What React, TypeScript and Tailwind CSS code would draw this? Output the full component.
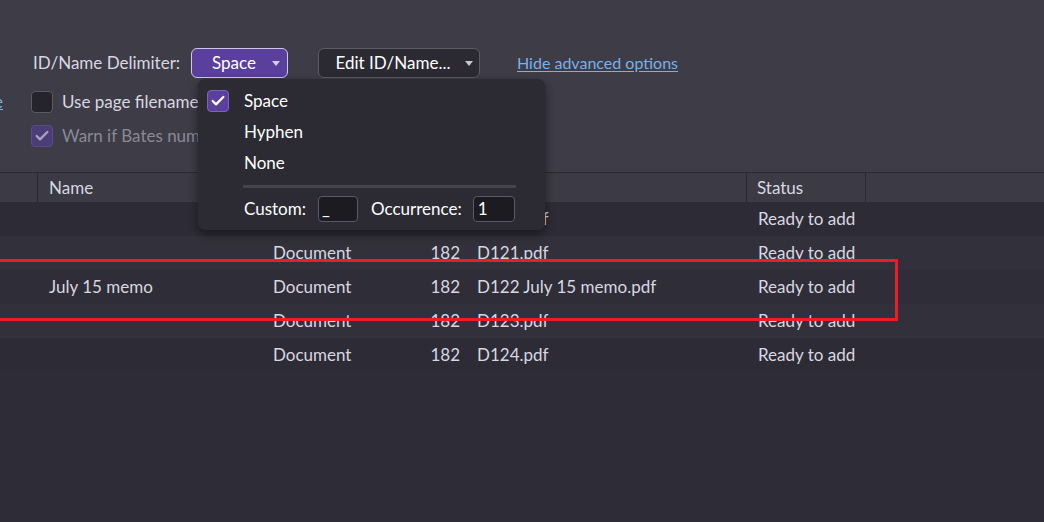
import { Check } from "lucide-react"

const ROWS = [
  { name: "", type: "Document", pages: "182", file: "D120.pdf", status: "Ready to add", bg: "bg-[#2d2c36]" },
  { name: "", type: "Document", pages: "182", file: "D121.pdf", status: "Ready to add", bg: "bg-[#32313b]" },
  { name: "July 15 memo", type: "Document", pages: "182", file: "D122 July 15 memo.pdf", status: "Ready to add", bg: "bg-[#2f2e38]" },
  { name: "", type: "Document", pages: "182", file: "D123.pdf", status: "Ready to add", bg: "bg-[#32313b]" },
  { name: "", type: "Document", pages: "182", file: "D124.pdf", status: "Ready to add", bg: "bg-[#2d2c36]" },
]

function Caret({ className = "" }: { className?: string }) {
  return (
    <svg width="8" height="5" viewBox="0 0 8 5" className={className}>
      <path d="M0 0h8L4 5z" fill="currentColor" />
    </svg>
  )
}

function Box({ checked, muted }: { checked?: boolean; muted?: boolean }) {
  if (!checked)
    return <span className="block w-[22px] h-[22px] rounded-[4px] bg-[#25242b] border border-[#5a5965]" />
  return (
    <span
      className={
        "flex w-[22px] h-[22px] rounded-[4px] items-center justify-center border " +
        (muted ? "bg-[#4b3d78] border-[#5b4d88]" : "bg-[#5b3f9e] border-[#7a66b8]")
      }
    >
      <Check size={16} strokeWidth={3.5} className={muted ? "text-[#a8a2c0]" : "text-white"} />
    </span>
  )
}

export default function App() {
  return (
    <div
      className="relative w-[1044px] h-[522px] overflow-hidden bg-[#2e2d37] text-[17px] text-[#d8d7e0]"
      style={{ fontFamily: "Lato, 'Noto Sans', sans-serif" }}
    >
      {/* options panel */}
      <div className="h-[172px] bg-[#3d3c47] pt-[48px]">
        <div className="flex items-center pl-[33px] h-[30px] whitespace-nowrap">
          <span className="w-[146px] shrink-0">ID/Name Delimiter:</span>
          <button className="ml-[12px] w-[97px] h-[30px] shrink-0 rounded-[6px] bg-[#5a3f9c] border border-[#cfc6ea] flex items-center text-white">
            <span className="flex-1 text-center pl-[4px]">Space</span>
            <Caret className="mr-[7px] text-[#d4cce8]" />
          </button>
          <button className="ml-[30px] w-[162px] h-[30px] shrink-0 rounded-[6px] bg-[#2b2a32] border border-[#5c5b66] flex items-center text-white">
            <span className="flex-1 text-center pl-[2px]">Edit ID/Name...</span>
            <Caret className="mr-[6px] text-[#c8c7d0]" />
          </button>
          <a className="ml-[37px] text-[16px] text-[#78b1ea] underline underline-offset-2">Hide advanced options</a>
        </div>
        <div className="flex items-center mt-[13px] h-[22px] whitespace-nowrap">
          <span className="ml-[-6px] w-[10px] text-[#78b1ea] underline">e</span>
          <span className="ml-[27px]"><Box /></span>
          <span className="ml-[9px]">Use page filename</span>
        </div>
        <div className="flex items-center mt-[12px] h-[22px] pl-[31px] whitespace-nowrap">
          <Box checked muted />
          <span className="ml-[9px] text-[#8a8996]">Warn if Bates number</span>
        </div>
      </div>

      {/* table */}
      <div className="flex h-[30px] bg-[#3b3a45] border-t border-[#2a2931]">
        <div className="w-[38px] border-r border-[#2a2931]" />
        <div className="w-[224px] pl-[11px] flex items-center border-r border-[#2a2931]">Name</div>
        <div className="w-[148px] pl-[11px] flex items-center border-r border-[#2a2931]">Type</div>
        <div className="w-[56px] flex items-center justify-end pr-[6px] border-r border-[#2a2931]">Pages</div>
        <div className="w-[281px] pl-[11px] flex items-center border-r border-[#2a2931]">Filename</div>
        <div className="w-[119px] pl-[10px] flex items-center border-r border-[#2a2931]">Status</div>
        <div className="flex-1" />
      </div>
      {ROWS.map((r, i) => (
        <div key={i} className={"flex h-[34px] items-center whitespace-nowrap " + r.bg}>
          <div className="w-[38px]" />
          <div className="w-[224px] pl-[11px]">{r.name}</div>
          <div className="w-[148px] pl-[11px]">{r.type}</div>
          <div className="w-[56px] text-right pr-[6px]">{r.pages}</div>
          <div className="w-[281px] pl-[11px]">{r.file}</div>
          <div className="w-[119px] pl-[11px]">{r.status}</div>
        </div>
      ))}

      {/* delimiter dropdown */}
      <div className="absolute left-[198px] top-[79px] w-[347px] h-[151px] rounded-[7px] bg-[#2c2b33] shadow-[0_4px_10px_rgba(0,0,0,0.45)] pt-[6px] whitespace-nowrap">
        <div className="flex items-center h-[31px] pl-[9px]">
          <Box checked />
          <span className="ml-[15px] text-white">Space</span>
        </div>
        <div className="flex items-center h-[31px] pl-[46px] text-white">Hyphen</div>
        <div className="flex items-center h-[31px] pl-[46px] text-white">None</div>
        <div className="ml-[45px] mt-[7px] w-[273px] h-[3px] bg-[#45444e]" />
        <div className="flex items-center mt-[8px] h-[26px] pl-[46px] text-white">
          <span>Custom:</span>
          <span className="ml-[12px] w-[40px] h-[26px] rounded-[4px] bg-[#1c1b21] border border-[#5a5965] pl-[3px] leading-[24px]">_</span>
          <span className="ml-[13px]">Occurrence:</span>
          <span className="ml-[11px] w-[42px] h-[26px] rounded-[4px] bg-[#1c1b21] border border-[#5a5965] pl-[4px] leading-[24px]">1</span>
        </div>
      </div>

      {/* annotation */}
      <div className="absolute left-[-10px] top-[259px] w-[908px] h-[62px] border-[3px] border-[#ee1c24]" />
    </div>
  )
}
